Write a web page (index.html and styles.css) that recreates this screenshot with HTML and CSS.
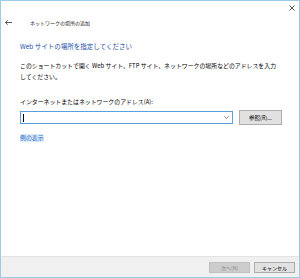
FILE: index.html
```html
<!DOCTYPE html>
<html lang="ja">
<head>
    <meta charset="UTF-8">
    <title>ネットワークの場所の追加</title>
    <link rel="stylesheet" href="styles.css">
</head>
<body>
    <div class="window">
        <div class="chrome">
            <span class="close">
                <svg width="6" height="6" viewBox="0 0 6 6"><path d="M0.5 0.5L5.5 5.5M5.5 0.5L0.5 5.5" stroke="#555" stroke-width="1"/></svg>
            </span>
        </div>

        <div class="nav">
            <span class="back">
                <svg width="7" height="5" viewBox="0 0 7 5"><path d="M0.5 2.5H7M2.8 0.3L0.6 2.5L2.8 4.7" fill="none" stroke="#333" stroke-width="0.8"/></svg>
            </span>
            <span class="title">ネットワークの場所の追加</span>
        </div>

        <div class="content">
            <h1 class="heading">Web サイトの場所を指定してください</h1>
            <p class="desc">このショートカットで開く Web サイト、FTP サイト、ネットワークの場所などのアドレスを入力してください。</p>

            <label class="field-label">インターネットまたはネットワークのアドレス(A):</label>
            <div class="field-row">
                <div class="combo">
                    <span class="caret"></span>
                    <svg class="chevron" width="5" height="3" viewBox="0 0 5 3"><path d="M0.3 0.3L2.5 2.5L4.7 0.3" fill="none" stroke="#555" stroke-width="0.7"/></svg>
                </div>
                <button class="btn">参照(R)...</button>
            </div>

            <a href="#" class="example-link">例の表示</a>
        </div>

        <div class="footer">
            <button class="btn btn-footer" disabled>次へ(N)</button>
            <button class="btn btn-footer">キャンセル</button>
        </div>
    </div>
</body>
</html>
```

FILE: styles.css
```css
* {
    margin: 0;
    padding: 0;
    box-sizing: border-box;
    font-family: 'Noto Sans CJK JP', 'Noto Sans', sans-serif;
}

body {
    background-color: #ffffff;
}

/* Window frame */
.window {
    width: 300px;
    height: 278px;
    border: 1px solid #9ccbe4;
    background: #ffffff;
    display: flex;
    flex-direction: column;
}

.chrome {
    height: 13px;
    display: flex;
    justify-content: flex-end;
    align-items: center;
    padding-right: 4px;
}

.close {
    display: flex;
    width: 6px;
    height: 6px;
}

.nav {
    display: flex;
    align-items: center;
    height: 16px;
    padding-left: 4px;
}

.back {
    display: flex;
    width: 7px;
    margin-right: 18px;
}

.title {
    font-size: 5px;
    color: #1a1a1a;
}

/* Main content */
.content {
    flex: 1;
    font-size: 5.9px;
    padding: 11px 21px 0 19px;
}

.heading {
    font-size: 6.5px;
    font-weight: normal;
    color: #1e50a8;
    line-height: 10px;
    margin-bottom: 9px;
}

.desc {
    font-size: 5.9px;
    line-height: 11px;
    color: #000000;
    margin-bottom: 15px;
}

.field-label {
    display: block;
    font-size: 5.9px;
    line-height: 10px;
    color: #000000;
    margin-bottom: 3px;
}

.field-row {
    display: flex;
    align-items: center;
    gap: 6px;
    margin-right: -5px;
    margin-bottom: 8px;
}

.combo {
    width: 213px;
    height: 13px;
    border: 1px solid #5a9fe0;
    display: flex;
    align-items: center;
    justify-content: space-between;
    padding: 0 3px 0 2px;
}

.caret {
    width: 1px;
    height: 8px;
    background: #000000;
}

.btn {
    height: 15px;
    width: 43px;
    background: #e1e1e1;
    border: 1px solid #adadad;
    font-size: 5.5px;
    color: #000000;
}

.example-link {
    display: inline-block;
    line-height: 8px;
    font-size: 5.9px;
    color: #1a66cc;
    text-decoration: none;
    background: #deebf8;
}

/* Footer */
.footer {
    height: 21px;
    background: #f0f0f0;
    border-top: 1px solid #e3e3e3;
    display: flex;
    justify-content: flex-end;
    align-items: center;
    gap: 4px;
    padding-right: 4px;
}

.btn-footer {
    height: 11px;
    width: 41px;
    font-size: 5px;
}

.btn-footer:disabled {
    background: #cccccc;
    border-color: #bfbfbf;
    color: #8a8a8a;
}
```
